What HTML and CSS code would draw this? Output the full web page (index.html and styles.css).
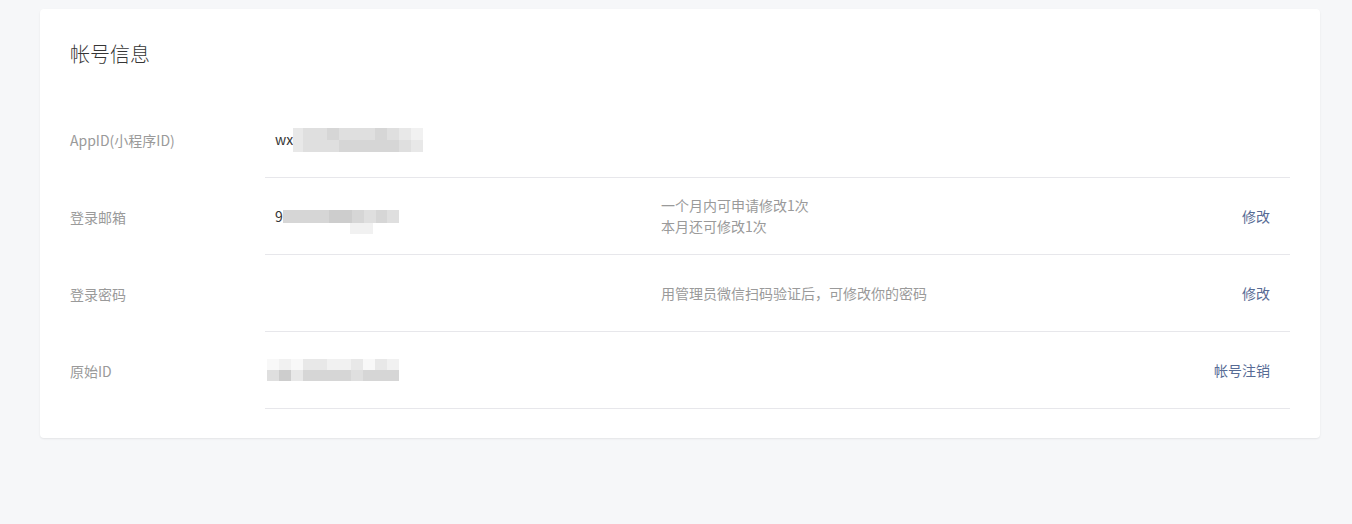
FILE: index.html
```html
<!DOCTYPE html>
<html lang="zh-CN">
  <head>
    <meta charset="UTF-8" />
    <meta name="viewport" content="width=device-width, initial-scale=1.0" />
    <title>帐号信息</title>
    <link rel="stylesheet" href="styles.css">
  </head>
  <body>
    <div class="card">
      <h2 class="title">帐号信息</h2>

      <div class="row">
        <div class="label">AppID(小程序ID)</div>
        <div class="content">
          <div class="value">
            wx<span class="mosaic m-appid">
              <span class="line">
                <i class="c4 w10"></i><i class="c3"></i><i class="c3"></i><i class="c2"></i><i class="c3"></i><i class="c3"></i><i class="c3"></i><i class="c2"></i><i class="c3"></i><i class="c4"></i><i class="c5"></i>
              </span>
              <span class="line">
                <i class="c4 w10"></i><i class="c3"></i><i class="c3"></i><i class="c3"></i><i class="c2"></i><i class="c2"></i><i class="c2"></i><i class="c2"></i><i class="c2"></i><i class="c3"></i><i class="c4"></i>
              </span>
            </span>
          </div>
          <div class="tip"></div>
          <div class="action"></div>
        </div>
      </div>

      <div class="row">
        <div class="label">登录邮箱</div>
        <div class="content">
          <div class="value">
            9<span class="mosaic m-mail">
              <span class="line">
                <i class="c2"></i><i class="c2"></i><i class="c2"></i><i class="c2"></i><i class="c1"></i><i class="c1"></i><i class="c2"></i><i class="c3"></i><i class="c2"></i><i class="c3"></i>
              </span>
              <span class="line sub">
                <i class="c5"></i><i class="c5"></i>
              </span>
            </span>
          </div>
          <div class="tip">一个月内可申请修改1次<br />本月还可修改1次</div>
          <a class="action" href="#">修改</a>
        </div>
      </div>

      <div class="row">
        <div class="label">登录密码</div>
        <div class="content">
          <div class="value"></div>
          <div class="tip">用管理员微信扫码验证后，可修改你的密码</div>
          <a class="action" href="#">修改</a>
        </div>
      </div>

      <div class="row">
        <div class="label">原始ID</div>
        <div class="content">
          <div class="value">
            <span class="mosaic m-raw">
              <span class="line">
                <i class="c6"></i><i class="c5"></i><i class="c6"></i><i class="c4"></i><i class="c4"></i><i class="c5"></i><i class="c5"></i><i class="c4"></i><i class="c6"></i><i class="c4"></i><i class="c5"></i>
              </span>
              <span class="line">
                <i class="c3"></i><i class="c1"></i><i class="c4"></i><i class="c2"></i><i class="c2"></i><i class="c2"></i><i class="c2"></i><i class="c3"></i><i class="c2"></i><i class="c2"></i><i class="c2"></i>
              </span>
            </span>
          </div>
          <div class="tip"></div>
          <a class="action" href="#">帐号注销</a>
        </div>
      </div>
    </div>
  </body>
</html>
```

FILE: styles.css
```css
body {
  margin: 0;
  padding: 9px 32px 86px 40px;
  background-color: #f6f7f9;
  font-family: "Noto Sans CJK SC", "Noto Sans", sans-serif;
  font-size: 14px;
  color: #353535;
}

.card {
  background-color: #fff;
  border-radius: 4px;
  box-shadow: 0 1px 2px rgba(0, 0, 0, 0.08);
  padding: 31px 30px 29px;
}

.title {
  margin: 0 0 33px;
  font-size: 20px;
  font-weight: 300;
  line-height: 28px;
  color: #353535;
}

.row {
  display: flex;
}

.label {
  width: 195px;
  flex-shrink: 0;
  color: #9a9a9a;
  display: flex;
  align-items: center;
}

.content {
  flex: 1;
  display: flex;
  align-items: center;
  height: 76px;
  border-bottom: 1px solid #e7e7eb;
  padding: 0 20px 0 10px;
}

.value {
  width: 386px;
  flex-shrink: 0;
  display: flex;
  align-items: center;
}

.tip {
  flex: 1;
  font-size: 14px;
  line-height: 21px;
  color: #9a9a9a;
}

.action {
  color: #576b95;
  text-decoration: none;
}

/* pixelated blur over private values */
.mosaic {
  display: inline-flex;
  flex-direction: column;
}

.mosaic .line {
  display: flex;
}

.mosaic i {
  display: block;
  width: 12px;
  height: 12px;
}

.mosaic i.w10 {
  width: 10px;
}

.m-appid {
  margin-top: 1px;
}

.m-mail .line i {
  width: 11.6px;
  height: 13px;
}

.m-mail .line.sub {
  padding-left: 67px;
  height: 0;
}

.m-mail .line.sub i {
  height: 11px;
}

.m-raw {
  margin-left: -8px;
}

.m-raw i {
  height: 11px;
}

.c1 { background-color: #cdcdcd; }
.c2 { background-color: #d6d6d6; }
.c3 { background-color: #dfdfdf; }
.c4 { background-color: #e8e8e8; }
.c5 { background-color: #f1f1f1; }
.c6 { background-color: #f8f8f8; }
```
